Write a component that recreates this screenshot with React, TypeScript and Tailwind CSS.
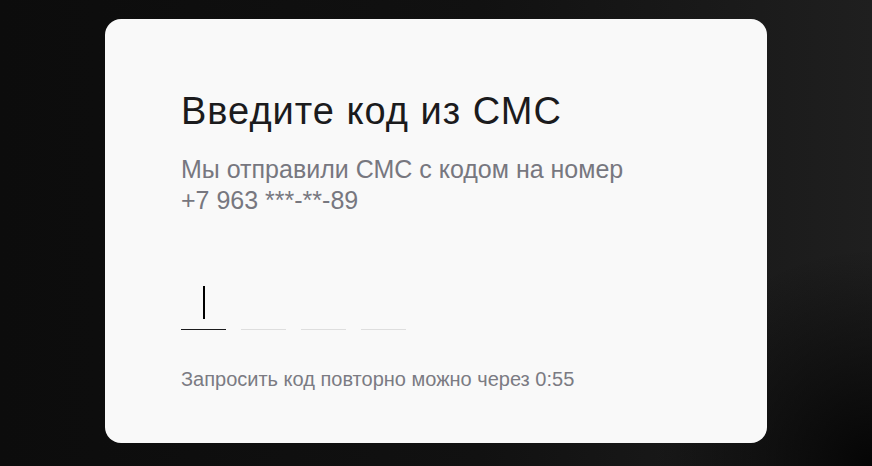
export default function App() {
  const cells = [0, 1, 2, 3];

  return (
    <div className="min-h-[466px] w-full bg-[radial-gradient(circle_at_100%_100%,#050505_0%,rgba(5,5,5,0)_22%),linear-gradient(to_right,#0c0c0c_0%,#111111_55%,#1f1f1f_100%)] pt-[19px] font-['Liberation_Sans',Arial,sans-serif]">
      <div className="mx-auto h-[424px] w-[662px] rounded-[16px] bg-[#f9f9f9] px-[76px] pt-[70px]">
        <h1 className="text-[38px] leading-[44px] tracking-[1px] text-[#1b1b1d]">Введите код из СМС</h1>
        <p className="mt-[21px] text-[25px] leading-[31px] text-[#77777f]">
          Мы отправили СМС с кодом на номер
          <br />
          +7 963 ***-**-89
        </p>

        <div className="mt-[68px] flex gap-[15px]">
          {cells.map((i) => (
            <div
              key={i}
              className={`flex h-[46px] w-[45px] items-end justify-center border-b pb-[10px] ${
                i === 0 ? 'border-[#1b1b1d]' : 'border-[#dedede]'
              }`}
            >
              {i === 0 && <span className="block h-[33px] w-[2px] bg-black" />}
            </div>
          ))}
        </div>

        <p className="mt-[37px] text-[20px] leading-[24px] text-[#7b7b83]">
          Запросить код повторно можно через 0:55
        </p>
      </div>
    </div>
  );
}
